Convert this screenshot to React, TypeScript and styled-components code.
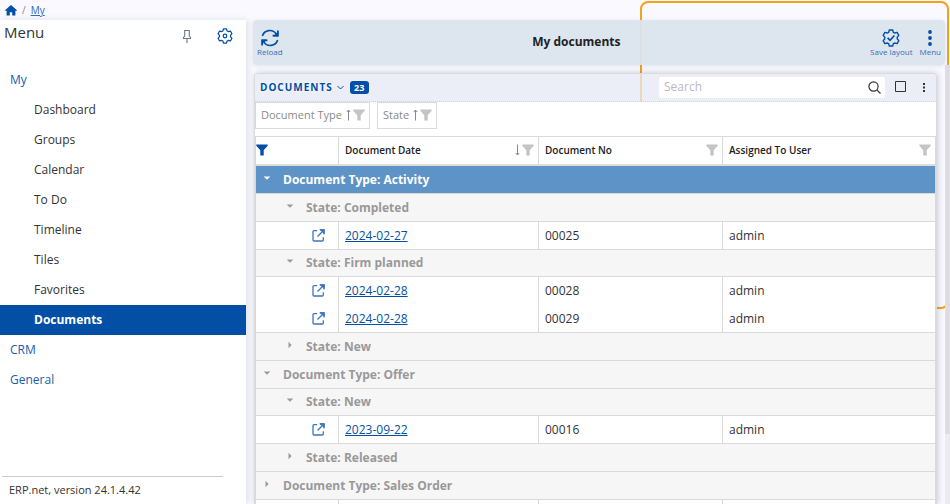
import React from "react";
import styled, { createGlobalStyle, css } from "styled-components";

const blue = "#034fa5";
const line = "#dadada";

const GlobalStyle = createGlobalStyle`
  * { box-sizing: border-box; }
  body {
    margin: 0;
    background: #f9f9ff;
    color: #333;
    font-family: "Open Sans", "Noto Sans", sans-serif;
    font-size: 12px;
    line-height: 20px;
  }
  button, input { font: inherit; }
`;

const Page = styled.div`
  position: relative;
  height: 100vh;
  overflow: hidden;
  display: flex;
  flex-direction: column;
`;

const Frame = styled.div`
  position: absolute;
  top: 1px;
  right: 1px;
  width: 309px;
  height: 308px;
  border: 2px solid #f7a11b;
  border-radius: 8px;
`;

const Breadcrumb = styled.nav`
  position: relative;
  display: flex;
  align-items: center;
  height: 20px;
  padding-left: 5px;
  gap: 5px;
  font-size: 10px;
  color: #888;
  a { color: #2f6cb8; }
  svg { display: block; }
`;

const Body = styled.div`
  position: relative;
  flex: 1;
  min-height: 0;
  display: flex;
`;

const Sidebar = styled.aside`
  width: 246px;
  flex: none;
  display: flex;
  flex-direction: column;
  background: #fff;
  box-shadow: 2px 0 6px rgba(40, 40, 90, 0.12);
`;

const SidebarHead = styled.div`
  display: flex;
  align-items: center;
  height: 45px;
  padding: 0 13px 13px 4px;
  gap: 25px;
`;

const SidebarTitle = styled.h1`
  flex: 1;
  margin: 0;
  padding-bottom: 8px;
  font-size: 15px;
  font-weight: 400;
  color: #333;
`;

const IconButton = styled.button`
  display: flex;
  align-items: center;
  justify-content: center;
  padding: 0;
  border: 0;
  background: none;
  color: ${blue};
`;

const NavList = styled.ul`
  flex: 1;
  margin: 0;
  padding: 0;
  list-style: none;
`;

const NavLink = styled.a<{ $child?: boolean; $active?: boolean }>`
  display: block;
  height: 30px;
  line-height: 30px;
  padding-left: ${(p) => (p.$child ? 34 : 10)}px;
  color: ${(p) => (p.$active ? "#fff" : p.$child ? "#333" : "#1a5cab")};
  background: ${(p) => (p.$active ? blue : "transparent")};
  font-weight: ${(p) => (p.$active ? 700 : 400)};
  text-decoration: none;
`;

const Version = styled.footer`
  margin: 0 23px 0 2px;
  padding: 3px 7px 4px;
  border-top: 1px solid #ccc;
  font-size: 11px;
`;

const Main = styled.main`
  flex: 1;
  min-width: 0;
  display: flex;
  flex-direction: column;
  padding-left: 7px;
`;

const Toolbar = styled.header`
  flex: none;
  display: flex;
  align-items: center;
  height: 45px;
  margin-right: 5px;
  padding: 0 4px 1px;
  border-radius: 4px;
  background: rgba(220, 228, 238, 0.96);
  box-shadow: 0 1px 4px rgba(60, 60, 110, 0.12);
`;

const ToolbarTitle = styled.h2`
  flex: 1;
  margin: 0;
  text-align: center;
  font-size: 12px;
  font-weight: 700;
  color: #222;
`;

const ToolbarActions = styled.div`
  display: flex;
  gap: 7px;
`;

const ToolButton = styled(IconButton)`
  flex-direction: column;
  font-size: 8px;
  line-height: 9px;
  color: #3a6fb5;
  svg { color: ${blue}; }
`;

const Scroller = styled.div`
  flex: 1;
  min-height: 0;
  display: flex;
`;

const ScrollTrack = styled.div`
  width: 5px;
  background: #ecebf2;
`;

const ScrollThumb = styled.div`
  height: 84%;
  background: #dedde3;
`;

const Panel = styled.section`
  flex: 1;
  min-width: 0;
  margin: 8px 8px 0 1px;
  border: 1px solid ${line};
  border-bottom: 0;
  border-radius: 4px 4px 0 0;
  box-shadow: 1px 0 6px rgba(40, 40, 80, 0.22);
`;

const PanelHead = styled.div`
  display: flex;
  align-items: center;
  height: 28px;
  padding: 0 5px 1px;
  border-bottom: 1px dotted #cfd3e2;
  border-radius: 4px 4px 0 0;
  background: rgba(229, 233, 244, 0.75);
`;

const PanelTitle = styled(IconButton)`
  gap: 4px;
  font-size: 10px;
  font-weight: 700;
  letter-spacing: 1px;
  text-shadow: 0 0 4px #fff;
`;

const Count = styled.span`
  margin-left: 6px;
  width: 19px;
  height: 13px;
  border-radius: 3px;
  background: ${blue};
  color: #fff;
  font-size: 9px;
  font-weight: 700;
  line-height: 13px;
  text-align: center;
`;

const SearchBox = styled.label`
  display: flex;
  align-items: center;
  width: 226px;
  height: 21px;
  margin: 0 8px 0 auto;
  padding: 0 4px 0 5px;
  border-radius: 2px;
  background: #fff;
  input {
    flex: 1;
    min-width: 0;
    padding: 0;
    border: 0;
    outline: 0;
    background: none;
    font-size: 12px;
  }
  input::placeholder { color: #bbb; }
`;

const HeadActions = styled.div`
  display: flex;
  gap: 10px;
  button { width: 14px; color: #333; }
`;

const PanelBody = styled.div`
  background: #fff;
`;

const GroupBar = styled.div`
  display: flex;
  gap: 7px;
  height: 34px;
`;

const Chip = styled.button`
  display: flex;
  align-items: center;
  height: 27px;
  padding: 0 4px 2px 5px;
  border: 1px solid ${line};
  background: #fff;
  color: #8a8a8a;
  font-size: 11px;
  svg:first-of-type { margin-left: 4px; }
  svg:last-of-type { margin-left: 2px; }
`;

const Grid = styled.table`
  width: 100%;
  table-layout: fixed;
  border-collapse: separate;
  border-spacing: 0;
  border-left: 1px solid ${line};
  border-top: 1px solid ${line};
`;

const HeadCell = styled.th`
  height: 29px;
  padding: 0 4px 2px 6px;
  border-right: 1px solid ${line};
  border-bottom: 2px solid #dddddb;
  text-align: left;
  font-size: 10px;
  font-weight: 600;
  color: #222;
  &:first-child { padding-left: 0; }
`;

const HeadContent = styled.div`
  display: flex;
  align-items: center;
  gap: 2px;
  span { flex: 1; }
`;

const Cell = styled.td<{ $divided?: boolean }>`
  height: 28px;
  padding: 0 6px;
  border-right: 1px solid ${line};
  border-bottom: 1px solid ${(p) => (p.$divided ? line : "transparent")};
  font-size: 12px;
  background: #fff;
  a { color: ${blue}; display: inline-block; vertical-align: middle; line-height: 20px; }
  &:first-child { padding: 0 13px 2px; text-align: right; }
  svg { display: block; }
`;

const GroupCell = styled.th<{ $level: number; $selected?: boolean; $compact?: boolean }>`
  height: ${(p) => (p.$compact ? 27 : 28)}px;
  padding: 0 0 0 ${(p) => (p.$level === 1 ? 6 : 29)}px;
  border-right: 1px solid ${line};
  border-bottom: 1px solid ${line};
  background: #f6f6f6;
  color: #999;
  font-size: 12px;
  font-weight: 700;
  text-align: left;
  ${(p) => p.$selected && css`background: #5d93c6; color: #fff;`}
`;

const GroupLabel = styled.div`
  display: flex;
  align-items: center;
  gap: 11px;
  button { width: 10px; height: 10px; margin-bottom: 4px; color: inherit; }
`;

const Home = () => (
  <svg width="12" height="11" viewBox="0 0 12 11" fill={blue}>
    <path d="M6 0 12 5.3 11.2 6.1 10.4 5.5V10.5H7.2V7.2H4.8V10.5H1.6V5.5L.8 6.1 0 5.3Z" />
  </svg>
);

const Pin = () => (
  <svg width="10" height="15" viewBox="0 0 10 15" fill="none" stroke="#6b7b85" strokeWidth="1.1">
    <path d="M2.7 1.5h4.6v5.5l1.2 1.5v1H1.5v-1l1.2-1.5ZM5 9.5V14" />
  </svg>
);

const gear =
  "M7.3 1h3.4L11.3 3.3 12.6 4 15.1 3.4 16.8 6.4 15.2 8.2V9.8L16.8 11.6 15.1 14.6 12.6 14 11.3 14.7 10.7 17H7.3L6.7 14.7 5.4 14 2.9 14.6 1.2 11.6 2.8 9.8V8.2L1.2 6.4 2.9 3.4 5.4 4 6.7 3.3Z";

const Gear = () => (
  <svg width="16" height="16" viewBox="0 0 18 18" fill="none" stroke="currentColor" strokeWidth="1.4" strokeLinejoin="round">
    <path d={gear} />
    <circle cx="9" cy="9" r="2" />
  </svg>
);

const SaveGear = () => (
  <svg width="18" height="18" viewBox="0 0 18 18" fill="none" stroke="currentColor" strokeWidth="1.4" strokeLinejoin="round">
    <path d={gear} />
    <path d="m5.6 8.8 2.5 2.5 4.3-4.8" strokeWidth="1.7" />
  </svg>
);

const Reload = () => (
  <svg width="18" height="18" viewBox="0 0 18 18" fill="none" stroke="currentColor" strokeWidth="1.6">
    <path d="M1.4 7A7.6 7.6 0 0 1 15.2 5.2M16.6 11A7.6 7.6 0 0 1 2.8 12.8" />
    <path d="M16.8 1.6V6.6H11.6M1.2 16.4V11.4H6.4" />
    <path d="M16.8 3.8V6.6H14ZM1.2 14.2V11.4H4Z" fill="currentColor" />
  </svg>
);

const Dots = ({ big = false }: { big?: boolean }) => (
  <svg width="6" height={big ? 18 : 11} viewBox={big ? "0 0 6 18" : "0 0 6 11"} fill="currentColor">
    {big ? (
      <>
        <circle cx="3" cy="3" r="1.9" />
        <circle cx="3" cy="9" r="1.9" />
        <circle cx="3" cy="15" r="1.9" />
      </>
    ) : (
      <path d="M2 1h2v2H2zM2 4.5h2v2H2zM2 8h2v2H2z" />
    )}
  </svg>
);

const ChevronDown = () => (
  <svg width="7" height="5" viewBox="0 0 7 5" fill="none" stroke="currentColor">
    <path d="M.5 1 3.5 4 6.5 1" />
  </svg>
);

const SearchIcon = () => (
  <svg width="13" height="13" viewBox="0 0 13 13" fill="none" stroke="#333" strokeWidth="1.2">
    <circle cx="5.5" cy="5.5" r="4.6" />
    <path d="m8.8 8.8 3.7 3.7" />
  </svg>
);

const Square = () => (
  <svg width="12" height="12" viewBox="0 0 12 12" fill="none" stroke="currentColor">
    <path d="M1.5.5h10v10h-10z" />
  </svg>
);

const Funnel = ({ color = "#c4c4c4" }: { color?: string }) => (
  <svg width="12" height="12" viewBox="0 0 12 12" fill={color}>
    <path d="M.3.5h11.4v1.3L7.7 6.2v5.3H4.3V6.2L.3 1.8Z" />
  </svg>
);

const Arrow = ({ down = false }: { down?: boolean }) => (
  <svg width="5" height="12" viewBox="0 0 5 12" fill="none" stroke="#888" strokeWidth="1">
    <path d={down ? "M2.5.5v10.5M.8 9 2.5 11 4.2 9" : "M2.5 11.5V1M.8 3 2.5 1 4.2 3"} />
  </svg>
);

const OpenIcon = () => (
  <svg width="13" height="13" viewBox="0 0 13 13" fill="none" stroke="#3b76bd" strokeWidth="1.3">
    <path d="M5.2 1.7H2A1 1 0 0 0 1 2.7V11a1 1 0 0 0 1 1h8.300a1 1 0 0 0 1-1V8.200" />
    <path d="M5.5 7.5 11.5 1.5M7.8 1H12v4.2" />
    <path d="M9 1H12V4Z" fill="#3b76bd" />
  </svg>
);

const Caret = ({ open }: { open: boolean }) => (
  <svg width="8" height="8" viewBox="0 0 8 8" fill="currentColor">
    <path d={open ? "M.7 2.5h6.6L4 5.8Z" : "M2.5.7v6.6L5.6 4Z"} />
  </svg>
);

type Row =
  | { kind: "group"; level: number; label: string; open: boolean; selected?: boolean; compact?: boolean }
  | { kind: "doc"; date: string; no: string; user: string; divided: boolean };

const rows: Row[] = [
  { kind: "group", level: 1, label: "Document Type: Activity", open: true, selected: true },
  { kind: "group", level: 2, label: "State: Completed", open: true },
  { kind: "doc", date: "2024-02-27", no: "00025", user: "admin", divided: true },
  { kind: "group", level: 2, label: "State: Firm planned", open: true, compact: true },
  { kind: "doc", date: "2024-02-28", no: "00028", user: "admin", divided: false },
  { kind: "doc", date: "2024-02-28", no: "00029", user: "admin", divided: true },
  { kind: "group", level: 2, label: "State: New", open: false },
  { kind: "group", level: 1, label: "Document Type: Offer", open: true },
  { kind: "group", level: 2, label: "State: New", open: true, compact: true },
  { kind: "doc", date: "2023-09-22", no: "00016", user: "admin", divided: true },
  { kind: "group", level: 2, label: "State: Released", open: false },
  { kind: "group", level: 1, label: "Document Type: Sales Order", open: false },
];

const navChildren = ["Dashboard", "Groups", "Calendar", "To Do", "Timeline", "Tiles", "Favorites", "Documents"];

export default function App() {
  return (
    <Page>
      <GlobalStyle />
      <Frame />
      <Breadcrumb aria-label="Breadcrumb">
        <a href="#home" aria-label="Home"><Home /></a>
        <span>/</span>
        <a href="#my">My</a>
      </Breadcrumb>
      <Body>
        <Sidebar>
          <SidebarHead>
            <SidebarTitle>Menu</SidebarTitle>
            <IconButton aria-label="Pin menu"><Pin /></IconButton>
            <IconButton aria-label="Settings"><Gear /></IconButton>
          </SidebarHead>
          <NavList>
            <li><NavLink href="#my">My</NavLink></li>
            {navChildren.map((name) => (
              <li key={name}>
                <NavLink href={`#${name}`} $child $active={name === "Documents"}>{name}</NavLink>
              </li>
            ))}
            <li><NavLink href="#crm">CRM</NavLink></li>
            <li><NavLink href="#general">General</NavLink></li>
          </NavList>
          <Version>ERP.net, version 24.1.4.42</Version>
        </Sidebar>
        <Main>
          <Toolbar>
            <ToolButton><Reload />Reload</ToolButton>
            <ToolbarTitle>My documents</ToolbarTitle>
            <ToolbarActions>
              <ToolButton><SaveGear />Save layout</ToolButton>
              <ToolButton><Dots big />Menu</ToolButton>
            </ToolbarActions>
          </Toolbar>
          <Scroller>
            <Panel>
              <PanelHead>
                <PanelTitle>DOCUMENTS<ChevronDown /></PanelTitle>
                <Count>23</Count>
                <SearchBox>
                  <input type="text" placeholder="Search" aria-label="Search" />
                  <SearchIcon />
                </SearchBox>
                <HeadActions>
                  <IconButton aria-label="Maximize"><Square /></IconButton>
                  <IconButton aria-label="More"><Dots /></IconButton>
                </HeadActions>
              </PanelHead>
              <PanelBody>
                <GroupBar>
                  <Chip>Document Type<Arrow /><Funnel /></Chip>
                  <Chip>State<Arrow /><Funnel /></Chip>
                </GroupBar>
                <Grid>
                  <colgroup>
                    <col style={{ width: 83 }} />
                    <col style={{ width: 200 }} />
                    <col style={{ width: 184 }} />
                    <col />
                  </colgroup>
                  <thead>
                    <tr>
                      <HeadCell><HeadContent><Funnel color={blue} /></HeadContent></HeadCell>
                      <HeadCell><HeadContent><span>Document Date</span><Arrow down /><Funnel /></HeadContent></HeadCell>
                      <HeadCell><HeadContent><span>Document No</span><Funnel /></HeadContent></HeadCell>
                      <HeadCell><HeadContent><span>Assigned To User</span><Funnel /></HeadContent></HeadCell>
                    </tr>
                  </thead>
                  <tbody>
                    {rows.map((row, i) =>
                      row.kind === "group" ? (
                        <tr key={i}>
                          <GroupCell colSpan={4} $level={row.level} $selected={row.selected} $compact={row.compact}>
                            <GroupLabel>
                              <IconButton aria-label="Toggle group" aria-expanded={row.open}><Caret open={row.open} /></IconButton>
                              {row.label}
                            </GroupLabel>
                          </GroupCell>
                        </tr>
                      ) : (
                        <tr key={i}>
                          <Cell $divided={row.divided}><a href="#open" aria-label="Open document"><OpenIcon /></a></Cell>
                          <Cell $divided={row.divided}><a href="#doc">{row.date}</a></Cell>
                          <Cell $divided={row.divided}>{row.no}</Cell>
                          <Cell $divided={row.divided}>{row.user}</Cell>
                        </tr>
                      )
                    )}
                    <tr aria-hidden="true">
                      <Cell /><Cell /><Cell /><Cell />
                    </tr>
                  </tbody>
                </Grid>
              </PanelBody>
            </Panel>
            <ScrollTrack><ScrollThumb /></ScrollTrack>
          </Scroller>
        </Main>
      </Body>
    </Page>
  );
}
